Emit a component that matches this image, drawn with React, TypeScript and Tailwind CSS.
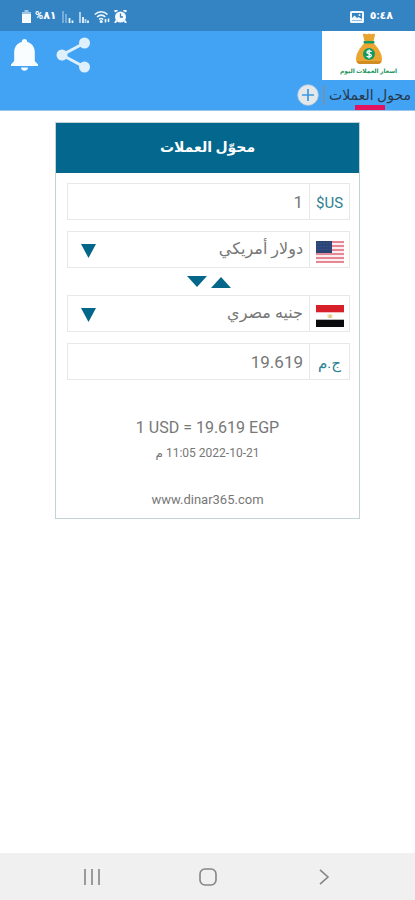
import React, { useState } from "react";

const MoneyBag = () => (
  <svg viewBox="0 0 28 32" className="h-8 w-7" aria-hidden="true">
    <path d="M8 2c0-1.200.8-1.600 2-1.200 1.500.5 2.500.5 4-.3 1.500.8 2.500.8 4 .3 1.200-.4 2 0 2 1.200L18.500 8h-9z" fill="#e9a32f" />
    <path d="M9.500 10h9c4.500 4.500 8.500 10.500 8.500 16 0 3-1.500 5-4 5H5c-2.500 0-4-2-4-5 0-5.500 4-11.500 8.500-16z" fill="#eda531" />
    <path d="M1.500 28c.8 2 2 3 3.500 3h18c1.500 0 2.700-1 3.500-3z" fill="#d18d22" />
    <rect x="8.500" y="8" width="11" height="2.500" rx="1" fill="#169a63" />
    <circle cx="14" cy="21" r="6" fill="#149a60" />
    <path d="M16.500 18.800c-.8-1.200-4.600-1.300-4.600.5 0 2 4.500 1.100 4.500 3.300 0 1.900-4 1.800-4.800.4M14.100 16.600v8.800" stroke="#fff" strokeWidth="1.300" fill="none" />
  </svg>
);

const UsFlag = () => (
  <svg viewBox="0 0 28 22" className="h-[22px] w-7" aria-hidden="true">
    <rect width="28" height="22" fill="#fbeef1" />
    {[0, 4, 8, 12, 16, 20].map((y) => (
      <rect key={y} y={y} width="28" height="2" fill="#e58893" />
    ))}
    <rect width="16" height="12" fill="#2c4577" />
    {[2, 5, 8].map((y) =>
      [2, 5, 8, 11, 14].map((x) => (
        <circle key={`${x}-${y}`} cx={x} cy={y + 0.5} r="0.5" fill="#53699a" />
      ))
    )}
  </svg>
);

const EgyptFlag = () => (
  <svg viewBox="0 0 28 22" className="h-[22px] w-7" aria-hidden="true">
    <rect width="28" height="22" fill="#fff" />
    <rect width="28" height="7.300" fill="#d8202a" />
    <rect y="14.700" width="28" height="7.300" fill="#0b0b0d" />
    <path d="M11.500 9.200l1.500.8 1-.9 1 .9 1.500-.8v3l-1 .8h-3l-1-.8z" fill="#ecdca0" />
    <path d="M14 9.500v3.500" stroke="#cdb45c" strokeWidth="0.800" />
  </svg>
);

const StatusBar = () => (
  <div className="flex h-[31px] items-center justify-between bg-[#3484c4] px-[22px] pt-0.5 text-[11px] text-white">
    <div className="flex items-center gap-1.5">
      <span className="font-bold">٥:٤٨</span>
      <svg viewBox="0 0 14 12" className="h-3 w-3.5" aria-hidden="true">
        <rect width="14" height="12" rx="1.500" fill="#f2f8fd" />
        <path d="M2 2h10v8H2z" fill="#3484c4" />
        <path d="M2 9.500V7l2.500-2.500L7 7l1.500-1L12 8v1.500z" fill="#f2f8fd" />
        <circle cx="9.500" cy="4" r="1" fill="#f2f8fd" />
      </svg>
    </div>
    <div dir="ltr" className="flex items-center gap-1">
      <svg viewBox="0 0 9 13" className="h-[13px] w-[9px]" aria-hidden="true">
        <path d="M2.500 0h4v2H9v11H0V2h2.500z" fill="#9cc5e6" />
        <path d="M0 4h9v9H0z" fill="#f5faff" />
      </svg>
      <span className="w-[23px] whitespace-nowrap font-bold">%٨١</span>
      <svg viewBox="0 0 28 12" className="h-3 w-7" aria-hidden="true">
        <path d="M1 0v12M4 3v9" stroke="#8dbbe0" strokeWidth="1.500" />
        <path d="M7.500 7v5M10.500 9.500v2.500M21 6v6M26 9.500v2.500" stroke="#e9f4fc" strokeWidth="1.800" />
        <path d="M18 1v11M23.500 8v4" stroke="#b8d7ee" strokeWidth="1.800" />
      </svg>
      <svg viewBox="0 0 16 14" className="h-3.5 w-4" fill="none" stroke="#eaf5fd" strokeWidth="1.600" aria-hidden="true">
        <path d="M.8 4.500C4.500.8 10 .8 13.500 4.500M3 7c2.500-2.500 6-2.500 8.300 0M5.200 9.500c1.200-1.200 2.800-1.200 4 0" />
        <circle cx="7.200" cy="11.500" r=".8" />
        <path d="M11.500 12.500V9M14.500 8.500V12" />
      </svg>
      <svg viewBox="0 0 13 13" className="h-[13px] w-[13px]" aria-hidden="true">
        <path d="M.5 1.500l3-1.500M12.500 1.500l-3-1.500M2.500 10.500L1 13M10.500 10.500L12 13" stroke="#f5faff" strokeWidth="2" />
        <circle cx="6.500" cy="7" r="5.500" fill="#f5faff" />
        <path d="M6.500 3.500V7H9" stroke="#3484c4" strokeWidth="1.300" fill="none" />
      </svg>
    </div>
  </div>
);

const Header = () => (
  <header className="flex h-20 items-start justify-between border-b border-[#9cc4e6] bg-[#42a3f5]">
    <div className="flex flex-col items-start">
      <div className="flex h-[49px] w-[93px] flex-col items-center bg-white pt-0.5">
        <MoneyBag />
        <span className="text-[6px] leading-3 font-bold whitespace-nowrap text-[#18945c]">اسعار العملات اليوم</span>
      </div>
      <nav className="flex h-[30px] items-center gap-1 pr-1">
        <a href="#converter" className="relative flex h-full items-center text-sm whitespace-nowrap text-[#26384a]">
          محول العملات
          <span className="absolute bottom-0 left-1/2 h-[5px] w-[30px] -translate-x-1/2 bg-[#e3125f]" />
        </a>
        <span className="h-5 w-0.5 bg-[#6f93b3]" />
        <button type="button" aria-label="إضافة">
          <svg viewBox="0 0 22 22" className="h-[22px] w-[22px]">
            <circle cx="11" cy="11" r="10.300" fill="#e4e8eb" stroke="#b9cbd9" strokeWidth="0.800" />
            <path d="M11 5v12M5 11h12" stroke="#3d99e4" strokeWidth="1.700" />
          </svg>
        </button>
      </nav>
    </div>
    <div className="flex items-center gap-[18px] pt-1.5 pl-[11px]">
      <button type="button" aria-label="مشاركة">
        <svg viewBox="0 0 35 36" className="h-9 w-[35px]" fill="#dff0fd">
          <path d="M28.500 6L6 18l22.500 12" fill="none" stroke="#dff0fd" strokeWidth="3" />
          <circle cx="28.500" cy="6" r="5.500" />
          <circle cx="6" cy="18" r="5.500" />
          <circle cx="28.500" cy="30" r="5.500" />
        </svg>
      </button>
      <button type="button" aria-label="الإشعارات">
        <svg viewBox="0 0 27 32" className="h-8 w-[27px]" fill="#fafdff">
          <path d="M13.500 0c1.700 0 2.700 1.200 2.700 3 5 1.300 7.600 5.200 7.600 10.300v8.700l3.200 3.500V27H0v-1.500L3.200 22v-8.700C3.200 8.200 5.800 4.300 10.800 3c0-1.800 1-3 2.700-3z" />
          <path d="M10 28.500h7c0 1.800-1.500 3.200-3.500 3.200S10 30.300 10 28.500z" />
        </svg>
      </button>
    </div>
  </header>
);

type FieldProps = {
  id: string;
  badge: React.ReactNode;
  children: React.ReactNode;
};

const Field: React.FC<FieldProps> = ({ id, badge, children }) => (
  <div className="flex h-[37px] border border-[#e8e8e8]">
    <label htmlFor={id} className="flex w-10 shrink-0 items-center justify-center border-l border-[#e8e8e8] pt-1 text-[15px] text-[#2d8191]">
      {badge}
    </label>
    <div className="relative min-w-0 flex-1">{children}</div>
  </div>
);

const CurrencySelect = ({ id, name }: { id: string; name: string }) => (
  <>
    <select id={id} className="h-full w-full appearance-none bg-transparent pr-1.5 pb-0.5 text-base text-[#777]">
      <option>{name}</option>
    </select>
    <svg viewBox="0 0 15 14" className="pointer-events-none absolute top-3 left-[13px] h-3.5 w-[15px]" aria-hidden="true">
      <path d="M0 0h15L7.500 14z" fill="#04678a" />
    </svg>
  </>
);

const Converter = () => {
  const [amount, setAmount] = useState("1");
  const [result, setResult] = useState("19.619");

  return (
    <section id="converter" className="mx-[55px] mt-[11px] border border-[#c3d3d3] bg-white">
      <h1 className="flex h-[50px] items-center justify-center bg-[#04678d] pb-0.5 text-sm font-bold text-white">
        محوّل العملات
      </h1>
      <div className="pt-2.5 pr-[9px] pl-[11px]">
        <Field id="amount" badge="US$">
          <input
            id="amount"
            value={amount}
            onChange={(e) => setAmount(e.target.value)}
            className="h-full w-full pr-1.5 text-[17px] text-[#777]"
          />
        </Field>
        <div className="mt-[11px]">
          <Field id="from" badge={<UsFlag />}>
            <CurrencySelect id="from" name="دولار أمريكي" />
          </Field>
        </div>
        <div className="flex h-[27px] items-center justify-center">
          <button type="button" aria-label="تبديل">
            <svg viewBox="0 0 44 12" className="h-3 w-11">
              <path d="M0 0h20L10 11z" fill="#04678a" />
              <path d="M24 12h20L34 1z" fill="#04678a" />
            </svg>
          </button>
        </div>
        <Field id="to" badge={<EgyptFlag />}>
          <CurrencySelect id="to" name="جنيه مصري" />
        </Field>
        <div className="mt-[11px]">
          <Field id="result" badge="ج.م">
            <input
              id="result"
              value={result}
              onChange={(e) => setResult(e.target.value)}
              className="h-full w-full pr-1.5 text-[17px] text-[#777]"
            />
          </Field>
        </div>
      </div>
      <div className="flex flex-col items-center pt-9 pb-2 text-[#777]">
        <p dir="ltr" className="text-base">1 USD = 19.619 EGP</p>
        <p className="mt-1 text-xs leading-[18px]">2022-10-21 11:05 م</p>
        <a href="#converter" className="mt-7 text-[13px] leading-5">www.dinar365.com</a>
      </div>
    </section>
  );
};

const NavBar = () => (
  <footer dir="ltr" className="flex h-[47px] items-center justify-around bg-[#f0f0f0] px-[34px] text-[#858585]">
    <button type="button" aria-label="التطبيقات الأخيرة">
      <svg viewBox="0 0 16 16" className="h-4 w-4">
        <path d="M1 0v16M8 0v16M15 0v16" stroke="currentColor" strokeWidth="1.600" />
      </svg>
    </button>
    <button type="button" aria-label="الرئيسية">
      <svg viewBox="0 0 18 18" className="h-[18px] w-[18px]">
        <rect x="1" y="1" width="16" height="16" rx="5" fill="none" stroke="currentColor" strokeWidth="1.600" />
      </svg>
    </button>
    <button type="button" aria-label="رجوع">
      <svg viewBox="0 0 16 16" className="h-4 w-4">
        <path d="M4 .8L12 8l-8 7.200" fill="none" stroke="currentColor" strokeWidth="1.600" />
      </svg>
    </button>
  </footer>
);

const App: React.FC = () => {
  return (
    <div dir="rtl" className="flex min-h-screen flex-col bg-white font-[Roboto,'DejaVu_Sans',sans-serif]">
      <StatusBar />
      <Header />
      <main className="flex-1">
        <Converter />
      </main>
      <NavBar />
    </div>
  );
};

export default App;
